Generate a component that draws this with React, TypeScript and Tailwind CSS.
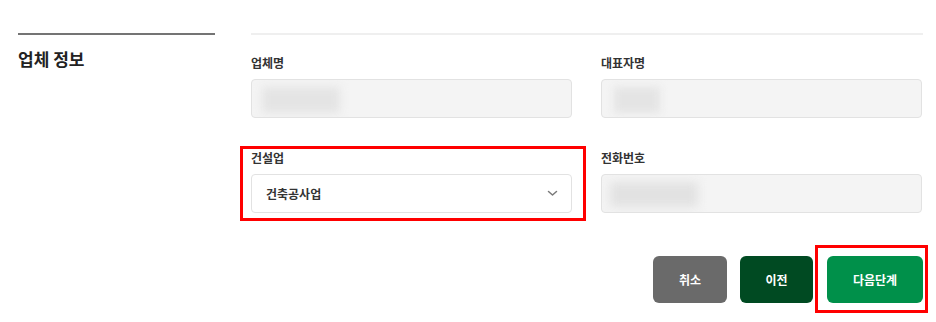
import React from "react";

const font = { fontFamily: '"Noto Sans CJK KR", "Noto Sans", sans-serif' };

function Label({ children }: { children: React.ReactNode }) {
  return <div className="text-[12px] leading-[16px] font-bold text-[#333] mb-[8px]">{children}</div>;
}

function BlurInput({ blobClass }: { blobClass: string }) {
  return (
    <div className="relative h-[39px] rounded-[4px] border border-[#e2e2e2] bg-[#f4f4f4] overflow-hidden">
      <div className={blobClass} />
    </div>
  );
}

export default function App() {
  return (
    <div className="w-[936px] h-[322px] bg-white pt-[33px] flex" style={font}>
      <div className="ml-[18px] w-[197px]">
        <div className="h-[2px] bg-[#747474]" />
        <h2 className="mt-[12px] text-[17px] leading-[24px] font-bold text-[#222]">업체 정보</h2>
      </div>
      <div className="ml-[36px] w-[672px]">
        <div className="h-[2px] bg-[#efefef]" />
        <div className="pt-[20px] grid grid-cols-[321px_321px] gap-x-[29px] gap-y-[32px]">
          <div>
            <Label>업체명</Label>
            <BlurInput blobClass="absolute left-[10px] top-[7px] w-[78px] h-[26px] bg-[#e4e4e4] blur-[5px]" />
          </div>
          <div>
            <Label>대표자명</Label>
            <BlurInput blobClass="absolute left-[12px] top-[7px] w-[46px] h-[26px] bg-[#e4e4e4] blur-[4px]" />
          </div>
          <div className="relative">
            <div className="absolute left-[-11px] top-[-4px] right-[-14px] bottom-[-8px] border-[3px] border-[#ff0000] pointer-events-none" />
            <Label>건설업</Label>
            <div className="h-[39px] rounded-[4px] border border-[#e2e2e2] bg-white flex items-center justify-between pl-[14px] pr-[13px]">
              <span className="text-[12px] font-bold text-[#333]">건축공사업</span>
              <svg width="11" height="7" viewBox="0 0 11 7" fill="none">
                <path d="M1.5 1.5 L5.5 5 L9.5 1.5" stroke="#7a7a7a" strokeWidth="1.5" strokeLinecap="round" strokeLinejoin="round" />
              </svg>
            </div>
          </div>
          <div>
            <Label>전화번호</Label>
            <BlurInput blobClass="absolute left-[8px] top-[7px] w-[88px] h-[25px] bg-[#e2e2e2] blur-[5px]" />
          </div>
        </div>
        <div className="mt-[43px] flex justify-end gap-[13px]">
          <button className="w-[74px] h-[47px] rounded-[6px] bg-[#6a6a6a] text-white text-[12px] font-bold">취소</button>
          <button className="w-[73px] h-[47px] rounded-[6px] bg-[#004a22] text-white text-[12px] font-bold">이전</button>
          <div className="relative ml-[1px]">
            <div className="absolute left-[-12px] top-[-11px] right-[-5px] bottom-[-10px] border-[3px] border-[#ff0000] pointer-events-none" />
            <button className="w-[96px] h-[47px] rounded-[6px] bg-[#00904a] text-white text-[12px] font-bold">다음단계</button>
          </div>
        </div>
      </div>
    </div>
  );
}
